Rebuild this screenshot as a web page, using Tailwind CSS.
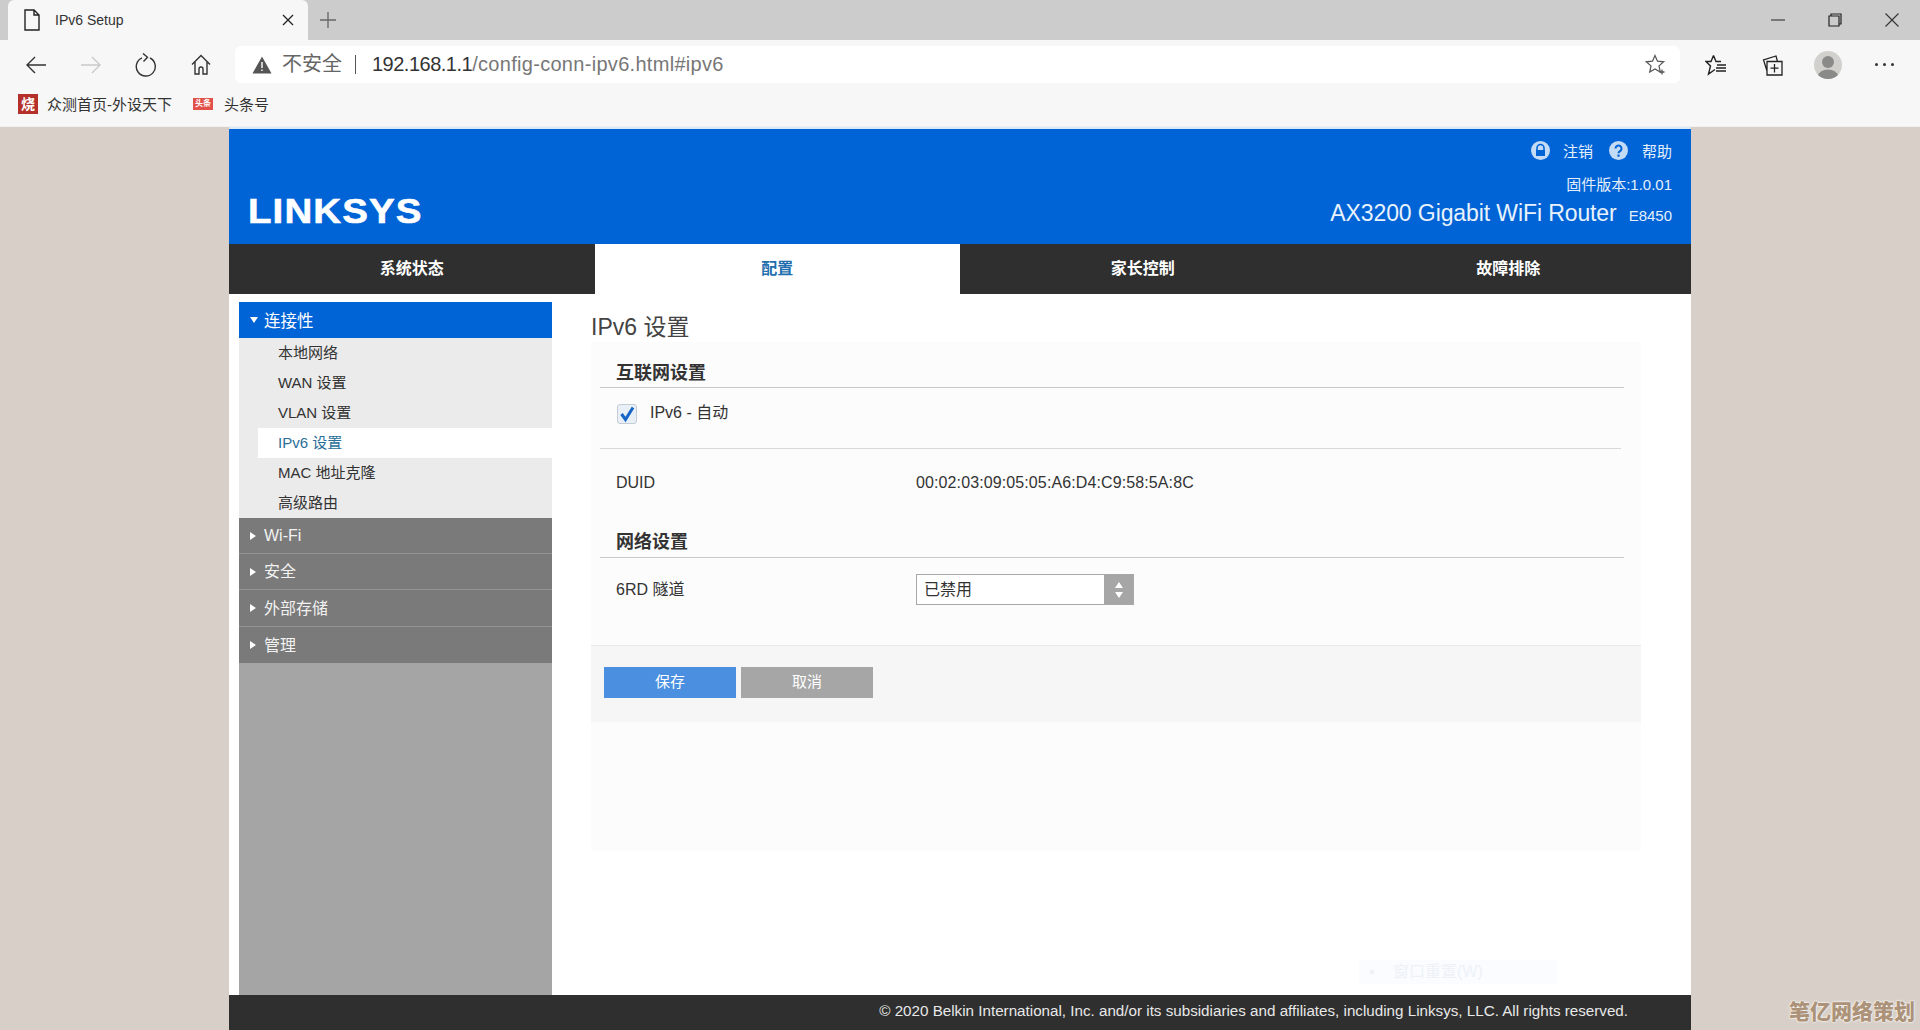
<!DOCTYPE html>
<html lang="zh-CN">
<head>
  <meta charset="UTF-8" />
  <title>IPv6 Setup</title>
  <script src="https://cdn.jsdelivr.net/npm/@tailwindcss/browser@4"></script>
</head>
<body class="w-[1920px] h-[1030px] overflow-hidden relative flex flex-col bg-[#d8d0c8] text-[#333] font-['Liberation_Sans','Noto_Sans_CJK_SC',sans-serif]">

  <!-- tab strip -->
  <div class="h-[40px] shrink-0 bg-[#cccccc] flex items-end">
    <div class="ml-[8px] w-[300px] h-[40px] bg-[#f7f7f7] rounded-t-[6px] flex items-center">
      <svg class="ml-[15px] w-[18px] h-[22px]" viewBox="0 0 18 22" fill="none" stroke="#222" stroke-width="1.4"><path d="M2 1h9l5 5v15H2zM11 1v5h5"/></svg>
      <span class="ml-[14px] text-[14px] text-[#333]">IPv6 Setup</span>
      <svg class="ml-auto mr-[14px] w-[12px] h-[12px]" viewBox="0 0 12 12" stroke="#222" stroke-width="1.3"><path d="M1 1l10 10M11 1L1 11"/></svg>
    </div>
    <div class="w-[40px] h-[40px] flex items-center justify-center">
      <svg class="w-[16px] h-[16px]" viewBox="0 0 16 16" stroke="#666" stroke-width="1.3"><path d="M8 0v16M0 8h16"/></svg>
    </div>
    <div class="ml-auto flex items-center h-[40px]">
      <div class="w-[57px] flex justify-center"><svg class="w-[14px] h-[14px]" viewBox="0 0 14 14" stroke="#333" stroke-width="1.1"><path d="M0 7h14"/></svg></div>
      <div class="w-[57px] flex justify-center"><svg class="w-[14px] h-[14px]" viewBox="0 0 14 14" fill="none" stroke="#222" stroke-width="1.2"><path d="M1 3h10v10H1zM3 3V1h10v10h-2"/></svg></div>
      <div class="w-[57px] flex justify-center"><svg class="w-[14px] h-[14px]" viewBox="0 0 14 14" stroke="#333" stroke-width="1.1"><path d="M0.5 0.5l13 13M13.500 0.5l-13 13"/></svg></div>
    </div>
  </div>

  <!-- toolbar -->
  <div class="h-[47px] shrink-0 bg-[#f7f7f7] flex items-start pt-[6px] pl-[8px]">
    <div class="w-[55px] h-[37px] flex items-center justify-center">
      <svg class="w-[22px] h-[20px]" viewBox="0 0 22 20" fill="none" stroke="#333" stroke-width="1.4"><path d="M21 10H2M10 2l-8 8 8 8"/></svg>
    </div>
    <div class="w-[55px] h-[37px] flex items-center justify-center">
      <svg class="w-[22px] h-[20px]" viewBox="0 0 22 20" fill="none" stroke="#c9c9c9" stroke-width="1.4"><path d="M1 10h19M12 2l8 8-8 8"/></svg>
    </div>
    <div class="w-[55px] h-[37px] flex items-center justify-center">
      <svg class="w-[22px] h-[24px]" viewBox="0 0 22 24" fill="none" stroke="#333" stroke-width="1.4"><path d="M7 4.800A9.500 9.500 0 1 0 15 5M8 0.500l4.500 3.800L8.500 8.500"/></svg>
    </div>
    <div class="w-[55px] h-[37px] flex items-center justify-center">
      <svg class="w-[20px] h-[21px]" viewBox="0 0 20 21" fill="none" stroke="#333" stroke-width="1.4"><path d="M1 10.500L10 1.500l9 9M4 8v12h4v-5a2 2 0 0 1 4 0v5h4V8"/></svg>
    </div>
    <div class="ml-[7px] w-[1445px] h-[37px] bg-white rounded-[6px] flex items-center pl-[17px] pr-[17px]">
      <svg class="w-[20px] h-[18px]" viewBox="0 0 20 18"><path d="M10 0.500L19.500 17.500H0.500z" fill="#555"/><path d="M9.300 6h1.400v6H9.300zM9.300 13.500h1.400v1.500H9.300z" fill="#fff"/></svg>
      <span class="ml-[10px] text-[20px] leading-[28px] -mt-[2px] text-[#666]">不安全</span>
      <span class="ml-[13px] w-px h-[19px] bg-[#555]"></span>
      <span class="ml-[16px] text-[20px] leading-[28px] -mt-[2px] text-[#333] tracking-[-0.5px]">192.168.1.1<span class="text-[#777] tracking-[0.3px]">/config-conn-ipv6.html#ipv6</span></span>
      <svg class="ml-auto mr-[-3px] w-[21px] h-[21px]" viewBox="0 0 21 21" fill="none" stroke="#555" stroke-width="1.2"><path d="M10 1.500l2.500 5.700 6.200.6-4.700 4.100 1.300 6.100-5.300-3.100-5.300 3.100 1.300-6.100L1.300 7.800l6.200-.6z"/><path d="M17 15.500v5M14.500 18h5" stroke-width="1.300"/></svg>
    </div>
    <div class="ml-[8px] w-[56px] h-[37px] flex items-center justify-center">
      <svg class="w-[22px] h-[22px]" viewBox="0 0 22 22" fill="none" stroke="#222" stroke-width="1.4"><path d="M8.500 1.500L11 7.500h5M8.500 1.500L6 7.500H1l4.500 4.500L3.500 20l6.500-4.500M12 11h9M11 14h10M11 17h10"/></svg>
    </div>
    <div class="w-[56px] h-[37px] flex items-center justify-center">
      <svg class="w-[22px] h-[22px]" viewBox="0 0 22 22" fill="none" stroke="#222" stroke-width="1.3"><path d="M6 7.500h15v13.500H6zM6 17L2.500 6 15 2l1.500 5.500M13.500 10v8.500M9.500 14.200h8"/></svg>
    </div>
    <div class="w-[56px] h-[37px] flex items-center justify-center">
      <svg class="w-[28px] h-[28px]" viewBox="0 0 28 28"><defs><clipPath id="av"><circle cx="14" cy="14" r="14"/></clipPath></defs><circle cx="14" cy="14" r="14" fill="#d2d0cd"/><g clip-path="url(#av)" fill="#8a8a88"><circle cx="14" cy="11" r="6"/><ellipse cx="14" cy="25" rx="10" ry="6.500"/></g></svg>
    </div>
    <div class="w-[56px] h-[37px] flex items-center justify-center gap-[5px]">
      <span class="w-[3px] h-[3px] rounded-full bg-[#333]"></span>
      <span class="w-[3px] h-[3px] rounded-full bg-[#333]"></span>
      <span class="w-[3px] h-[3px] rounded-full bg-[#333]"></span>
    </div>
  </div>

  <!-- bookmarks -->
  <div class="h-[40px] shrink-0 bg-[#f7f7f7] border-b border-[#f0f0f0] flex items-start pt-[7px] pl-[18px] text-[15px] leading-[22px] text-[#333]">
    <span class="w-[20px] h-[20px] bg-[#b5302a] text-white text-[14px] font-bold leading-[20px] text-center">烧</span>
    <span class="ml-[9px]">众测首页-外设天下</span>
    <span class="ml-[21px] mt-[4px] w-[20px] h-[12px] bg-[#e2504a] text-white text-[8px] font-bold leading-[12px] text-center">头条</span>
    <span class="ml-[11px]">头条号</span>
  </div>

  <!-- router page -->
  <div class="flex-1 min-h-0 w-[1462px] ml-[229px] bg-[#dbe8f6] pt-[2px] flex flex-col">
    <header class="h-[115px] shrink-0 bg-[#0064d6] flex justify-between text-white">
      <div class="pl-[19px] pt-[58px]">
        <span class="block origin-left scale-x-[1.1] text-[35px] leading-[48px] font-bold tracking-[1px] whitespace-nowrap [-webkit-text-stroke:0.6px_white]">LINKSYS</span>
      </div>
      <div class="pr-[19px] flex flex-col items-end">
        <div class="mt-[13px] h-[20px] flex items-center text-[15px] text-[#e4effb]">
          <svg class="w-[19px] h-[19px] -mt-[3px]" viewBox="0 0 19 19"><circle cx="9.500" cy="9.500" r="9.500" fill="#c4dbf5"/><path d="M6 9V7a3.500 3.500 0 0 1 7 0v2" fill="none" stroke="#0064d6" stroke-width="1.600"/><rect x="5" y="9" width="9" height="6" fill="#0064d6"/></svg>
          <span class="ml-[13px]">注销</span>
          <svg class="ml-[16px] -mt-[3px] w-[19px] h-[19px]" viewBox="0 0 19 19"><circle cx="9.500" cy="9.500" r="9.500" fill="#c4dbf5"/><path d="M6.500 7.500a3 3 0 1 1 4.500 2.600c-1 .6-1.500 1-1.500 2.200" fill="none" stroke="#0064d6" stroke-width="2"/><rect x="8.400" y="13.500" width="2.200" height="2.200" fill="#0064d6"/></svg>
          <span class="ml-[14px]">帮助</span>
        </div>
        <div class="mt-[13px] text-[15px] leading-[20px] text-[#e4effb]">固件版本:1.0.01</div>
        <div class="flex items-baseline">
          <span class="text-[23px] leading-[36px] tracking-[-0.1px] text-[#e8f2fc]">AX3200 Gigabit WiFi Router</span>
          <span class="ml-[12px] text-[15px] text-[#e4effb]">E8450</span>
        </div>
      </div>
    </header>

    <nav class="h-[50px] shrink-0 grid grid-cols-4 bg-[#2f2f2f] text-[16px] font-bold text-white text-center leading-[50px]">
      <a>系统状态</a>
      <a class="bg-white text-[#1f6fae]">配置</a>
      <a>家长控制</a>
      <a>故障排除</a>
    </nav>

    <div class="flex-1 min-h-0 flex bg-white">
      <aside class="ml-[10px] mt-[8px] w-[313px] shrink-0 bg-[#a5a5a5] text-[15px]">
        <div class="h-[36px] bg-[#0064d6] text-white flex items-center pl-[11px]">
          <span class="w-0 h-0 border-x-[4px] border-x-transparent border-t-[6px] border-t-white"></span>
          <span class="ml-[6px] text-[16.500px] leading-[38px] mt-[1px]">连接性</span>
        </div>
        <ul class="h-[180px] bg-[#ebebeb] pl-[19px] leading-[30px] text-[#333]">
          <li class="pl-[20px]">本地网络</li>
          <li class="pl-[20px]">WAN 设置</li>
          <li class="pl-[20px]">VLAN 设置</li>
          <li class="pl-[20px] bg-white text-[#2a6f97]">IPv6 设置</li>
          <li class="pl-[20px]">MAC 地址克隆</li>
          <li class="pl-[20px]">高级路由</li>
        </ul>
        <div class="text-[16px] text-[#f2f2f2]">
          <div class="h-[36px] bg-[#7a7a7a] border-b border-[#939393] flex items-center pl-[11px]"><span class="w-0 h-0 border-y-[4.500px] border-y-transparent border-l-[6px] border-l-white"></span><span class="ml-[8px] mt-[1px]">Wi-Fi</span></div>
          <div class="h-[36px] bg-[#7a7a7a] border-b border-[#939393] flex items-center pl-[11px]"><span class="w-0 h-0 border-y-[4.500px] border-y-transparent border-l-[6px] border-l-white"></span><span class="ml-[8px] mt-[1px]">安全</span></div>
          <div class="h-[37px] bg-[#7a7a7a] border-b border-[#939393] flex items-center pl-[11px]"><span class="w-0 h-0 border-y-[4.500px] border-y-transparent border-l-[6px] border-l-white"></span><span class="ml-[8px] mt-[1px]">外部存储</span></div>
          <div class="h-[36px] bg-[#7a7a7a] flex items-center pl-[11px]"><span class="w-0 h-0 border-y-[4.500px] border-y-transparent border-l-[6px] border-l-white"></span><span class="ml-[8px] mt-[1px]">管理</span></div>
        </div>
      </aside>

      <main class="ml-[39px] w-[1050px] shrink-0">
        <h1 class="mt-[18px] h-[30px] leading-[30px] text-[23px] text-[#444]">IPv6 设置</h1>
        <div class="h-[509px] bg-[#fcfcfc]">
          <div class="pt-[1px] pl-[9px] pr-[17px] h-[303px]">
            <div class="h-[45px] border-b border-[#c8c8c8] pl-[16px] text-[18px] leading-[60px] font-bold text-[#333]">互联网设置</div>
            <div class="h-[61px] w-[1021px] border-b border-[#d8d8d8] pl-[17px] pt-[15px] flex items-start text-[16px] text-[#333]">
              <svg class="w-[20px] h-[20px] mt-[1px]" viewBox="0 0 20 20"><rect x="0.500" y="0.500" width="19" height="19" rx="2.500" fill="#e9eff6" stroke="#c4ccd4"/><path d="M4.500 10l4 5.500L16 3.500" fill="none" stroke="#1565c8" stroke-width="3"/></svg>
              <span class="ml-[13px] leading-[20px]">IPv6 - 自动</span>
            </div>
            <div class="h-[68px] pl-[16px] flex items-center text-[16px] text-[#333]">
              <span class="w-[300px]">DUID</span>
              <span class="tracking-[0.11px]">00:02:03:09:05:05:A6:D4:C9:58:5A:8C</span>
            </div>
            <div class="h-[41px] border-b border-[#c8c8c8] pl-[16px] text-[18px] leading-[50px] font-bold text-[#333]">网络设置</div>
            <div class="mt-[16px] h-[31px] pl-[16px] flex items-center text-[16px] text-[#333]">
              <span class="w-[300px]">6RD 隧道</span>
              <div class="w-[218px] h-[31px] border border-[#a8a8a8] bg-white flex items-center">
                <span class="pl-[7px] flex-1">已禁用</span>
                <span class="w-[29px] h-full bg-[#a6a6a6] flex flex-col items-center justify-center gap-[4px]">
                  <span class="w-0 h-0 border-x-[4px] border-x-transparent border-b-[6px] border-b-white"></span>
                  <span class="w-0 h-0 border-x-[4px] border-x-transparent border-t-[6px] border-t-white"></span>
                </span>
              </div>
            </div>
          </div>
          <div class="h-[77px] bg-[#f6f6f6] border-t border-[#e8e8e8] pl-[13px] pt-[21px] flex gap-[5px] text-[15px] text-white">
            <button class="w-[132px] h-[31px] bg-[#4a8fe0]">保存</button>
            <button class="w-[132px] h-[31px] bg-[#a6a6a6]">取消</button>
          </div>
        </div>
      </main>
    </div>

    <footer class="h-[35px] shrink-0 bg-[#2f2f2f] text-[15.200px] leading-[31px] text-[#e8e8e8] text-right pr-[63px]">© 2020 Belkin International, Inc. and/or its subsidiaries and affiliates, including Linksys, LLC. All rights reserved.</footer>
  </div>

  <!-- faint ghost overlay and watermark -->
  <div class="absolute left-[1359px] top-[960px] w-[198px] h-[24px] bg-[#fafcff] flex items-center pl-[10px] text-[16px] text-[#eef2f8]"><span class="w-[12px]">▪</span><span class="ml-[12px]">窗口重置(W)</span></div>
  <div class="absolute left-[1789px] top-[998px] text-[21px] leading-[28px] font-black text-[#ab9278] [text-shadow:0_0_2px_#fff,0_0_2px_#fff] whitespace-nowrap">笔亿网络策划</div>
</body>
</html>
